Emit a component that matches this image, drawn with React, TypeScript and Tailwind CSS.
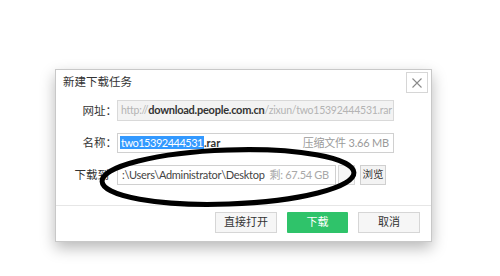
import React from "react";

const font = { fontFamily: '"Noto Sans", "Noto Sans CJK SC", sans-serif' };
const latin = { fontFamily: 'Lato, "Noto Sans CJK SC", sans-serif' };

export default function App() {
  return (
    <div className="relative w-[500px] h-[276px] bg-white overflow-hidden" style={font}>
      <div className="pt-[69px] pl-[55px]">
        <div className="relative w-[377px] h-[173px] bg-white border border-[#c8c8c8] shadow-[0_6px_14px_rgba(0,0,0,0.28)] flex flex-col">
          {/* title */}
          <div className="flex items-start justify-between h-[30px] pl-[7px] pr-[3px] pt-[2px]">
            <span className="text-[11.5px] text-[#333] leading-[18px] mt-[1px]">新建下载任务</span>
            <button className="w-[22px] h-[21px] border border-[#d6d6d6] bg-white flex items-center justify-center">
              <svg width="12" height="12" viewBox="0 0 12 12">
                <path d="M1.5 1.5 L10.5 10.5 M10.5 1.5 L1.5 10.5" stroke="#8a8a8a" strokeWidth="1.1" />
              </svg>
            </button>
          </div>
          {/* rows */}
          <div className="flex flex-col gap-[12px] pl-[24px]">
            <div className="flex items-center h-[21px]">
              <span className="w-[37px] text-right text-[11.5px] text-[#333]">网址：</span>
              <div className="w-[277px] h-[21px] border border-[#d9d9d9] bg-[#f3f3f3] flex items-center px-[3px] overflow-hidden whitespace-nowrap text-[10.5px] tracking-[-0.25px]" style={latin}>
                <span className="text-[#b4b4b4]">http://</span>
                <span className="text-[#333] font-bold text-[11px]">download.people.com.cn</span>
                <span className="text-[#b4b4b4]">/zixun/two15392444531.rar</span>
              </div>
            </div>
            <div className="flex items-center h-[20px]">
              <span className="w-[37px] text-right text-[11.5px] text-[#333]">名称：</span>
              <div className="w-[277px] h-[20px] border border-[#d0d0d0] bg-white flex items-center justify-between pl-[2px] pr-[4px] whitespace-nowrap text-[11px]" style={latin}>
                <span>
                  <span className="bg-[#3399ff] text-white px-[1px] tracking-[-0.5px]">two15392444531</span>
                  <span className="text-[#333] font-bold">.rar</span>
                </span>
                <span className="text-[#9a9a9a] tracking-[-0.2px]">压缩文件 3.66 MB</span>
              </div>
            </div>
            <div className="flex items-center h-[20px]">
              <span className="w-[37px] text-right text-[11.5px] text-[#333] whitespace-nowrap -ml-[8px] mr-[8px]">下载到</span>
              <div className="w-[219px] h-[20px] border border-[#d0d0d0] bg-white flex items-center pl-[4px] whitespace-nowrap overflow-hidden text-[11px] tracking-[-0.3px]" style={latin}>
                <span className="text-[#444]">:\Users\Administrator\Desktop</span>
                <span className="text-[#a8a8a8] ml-[5px]">剩: 67.54 GB</span>
              </div>
              <div className="w-[17px] h-[20px] ml-[2px] border border-[#d8d8d8] bg-[#f7f7f7]" />
              <button className="ml-[5px] w-[26px] h-[20px] border border-[#cfcfcf] bg-[#f3f3f3] text-[10.5px] text-[#333] flex items-center justify-center">浏览</button>
            </div>
          </div>
          <div className="mt-[20px] border-t border-[#e6e6e6]" />
          <div className="flex justify-end gap-[10px] pr-[11px] pt-[6px]">
            <button className="w-[62px] h-[21px] border border-[#d6d6d6] bg-[#f6f6f6] text-[11px] text-[#333] flex items-center justify-center">直接打开</button>
            <button className="w-[61px] h-[21px] bg-[#2fc36a] text-[11px] text-white flex items-center justify-center rounded-[1px]">下载</button>
            <button className="w-[62px] h-[21px] border border-[#d6d6d6] bg-[#f6f6f6] text-[11px] text-[#333] flex items-center justify-center">取消</button>
          </div>
        </div>
      </div>
      {/* hand-drawn annotation ellipse */}
      <svg className="absolute left-0 top-0 pointer-events-none" width="500" height="276" viewBox="0 0 500 276">
        <ellipse cx="228" cy="177" rx="126" ry="27" fill="none" stroke="#000" strokeWidth="5" transform="rotate(-2 228 177)" />
      </svg>
    </div>
  );
}
